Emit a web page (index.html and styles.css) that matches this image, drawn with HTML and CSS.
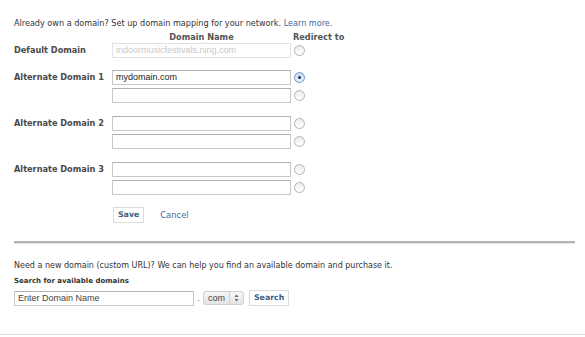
FILE: index.html
```html
<!DOCTYPE html>
<html>
<head>
<meta charset="utf-8">
<link rel="stylesheet" href="styles.css">
</head>
<body>
<div class="page">
  <p class="intro">Already own a domain? Set up domain mapping for your network. <a class="link" href="#">Learn more.</a></p>
  <div class="head">
    <span class="head-name">Domain Name</span>
    <span class="head-redirect">Redirect to</span>
  </div>
  <div class="group first">
    <div class="label">Default Domain</div>
    <div class="fields">
      <div class="field"><div class="input disabled">indoormusicfestivals.ning.com</div><span class="radio"></span></div>
    </div>
  </div>
  <div class="group">
    <div class="label">Alternate Domain 1</div>
    <div class="fields">
      <div class="field"><div class="input">mydomain.com</div><span class="radio checked"></span></div>
      <div class="field"><div class="input"></div><span class="radio"></span></div>
    </div>
  </div>
  <div class="group">
    <div class="label">Alternate Domain 2</div>
    <div class="fields">
      <div class="field"><div class="input"></div><span class="radio"></span></div>
      <div class="field"><div class="input"></div><span class="radio"></span></div>
    </div>
  </div>
  <div class="group">
    <div class="label">Alternate Domain 3</div>
    <div class="fields">
      <div class="field"><div class="input"></div><span class="radio"></span></div>
      <div class="field"><div class="input"></div><span class="radio"></span></div>
    </div>
  </div>
  <div class="actions">
    <span class="btn">Save</span>
    <a class="cancel" href="#">Cancel</a>
  </div>
  <div class="rule"></div>
  <p class="need">Need a new domain (custom URL)? We can help you find an available domain and purchase it.</p>
  <p class="search-label">Search for available domains</p>
  <div class="search-row">
    <div class="input search-input">Enter Domain Name</div>
    <span class="dot">.</span>
    <div class="select"><span class="select-text">com</span><span class="select-arrows"><svg width="5" height="8" viewBox="0 0 5 8"><path d="M2.5 0.5 L4.5 3 L0.5 3 Z M2.5 7.5 L4.5 5 L0.5 5 Z" fill="#666"/></svg></span></div>
    <span class="btn search-btn">Search</span>
  </div>
</div>
</body>
</html>
```
FILE: styles.css
```css
html, body {
  margin: 0;
  padding: 0;
  background: #fff;
}
body {
  font-family: "DejaVu Sans", "Liberation Sans", sans-serif;
  font-size: 8px;
  color: #333;
  width: 585px;
  height: 337px;
  overflow: hidden;
}
.page {
  box-sizing: border-box;
  height: 335px;
  padding: 17px 0 0 14px;
  border-bottom: 1px solid #dcdcdc;
}
p { margin: 0; }
.intro {
  line-height: 12px;
  font-size: 8.1px;
}
.link, .cancel {
  color: #3b6a9e;
  text-decoration: none;
}
.head {
  display: flex;
  margin-top: 2px;
  line-height: 12px;
  font-weight: bold;
  color: #555;
  font-size: 8.2px;
}
.head-name {
  margin-left: 98px;
  width: 179px;
  text-align: center;
}
.head-redirect {
  margin-left: 2px;
}
.group {
  display: flex;
  margin-top: 12px;
}
.group.first { margin-top: 0; }
.group + .group { margin-top: 13px; }
.group.first + .group { margin-top: 12px; }
.label {
  width: 98px;
  font-weight: bold;
  font-size: 8.2px;
  line-height: 15px;
  color: #4a4a4a;
}
.fields {
  display: flex;
  flex-direction: column;
  gap: 3px;
}
.field {
  display: flex;
  align-items: center;
  gap: 3px;
}
.input {
  box-sizing: border-box;
  width: 179px;
  height: 15px;
  border: 1px solid #c8c8c8;
  border-top-color: #b0b0b0;
  background: #fff;
  font-family: "Liberation Sans", Arial, sans-serif;
  font-size: 9px;
  line-height: 13px;
  padding-left: 3px;
  color: #222;
  white-space: nowrap;
  overflow: hidden;
}
.input.disabled {
  border-color: #e2e2e2;
  color: #c8c8c8;
}
.radio {
  box-sizing: border-box;
  width: 11px;
  height: 11px;
  border-radius: 50%;
  border: 1px solid #b4b4b4;
  background: linear-gradient(#ececec, #fff);
  position: relative;
}
.radio.checked {
  border-color: #7395c2;
  background: linear-gradient(#c5d9f0, #eaf2fb);
}
.radio.checked::after {
  content: "";
  position: absolute;
  left: 3px;
  top: 3px;
  width: 3px;
  height: 3px;
  border-radius: 50%;
  background: #1c2f4d;
}
.actions {
  display: flex;
  align-items: center;
  margin: 12px 0 0 99px;
  gap: 16px;
}
.btn {
  box-sizing: border-box;
  display: inline-block;
  height: 16px;
  line-height: 14px;
  padding: 0 4px;
  border: 1px solid #dcdcdc;
  background: #fff;
  color: #3a5a82;
  font-weight: bold;
  font-size: 7.8px;
}
.cancel {
  font-size: 8.4px;
}
.rule {
  width: 561px;
  height: 2px;
  margin-top: 18px;
  background: #b4b4b4;
  border-bottom: 1px solid #e4e4e4;
}
.need {
  margin-top: 16px;
  line-height: 12px;
}
.search-label {
  margin-top: 3px;
  line-height: 12px;
  font-weight: bold;
  font-size: 7px;
  color: #333;
}
.search-row {
  display: flex;
  align-items: center;
  margin-top: 3px;
}
.search-input {
  width: 180px;
  color: #444;
}
.dot {
  width: 9px;
  text-align: center;
  color: #666;
}
.select {
  box-sizing: border-box;
  display: flex;
  align-items: center;
  width: 41px;
  height: 14px;
  border: 1px solid #d0d0d0;
  border-radius: 3px;
  background: linear-gradient(#f6f6f6, #e4e4e4);
  font-family: "Liberation Sans", Arial, sans-serif;
  font-size: 9px;
  color: #444;
}
.select-text {
  width: 26px;
  padding-left: 4px;
  box-sizing: border-box;
  border-right: 1px solid #cfcfcf;
  line-height: 12px;
}
.select-arrows {
  flex: 1;
  display: flex;
  justify-content: center;
  align-items: center;
}
.search-btn {
  margin-left: 5px;
  height: 16px;
}
```
